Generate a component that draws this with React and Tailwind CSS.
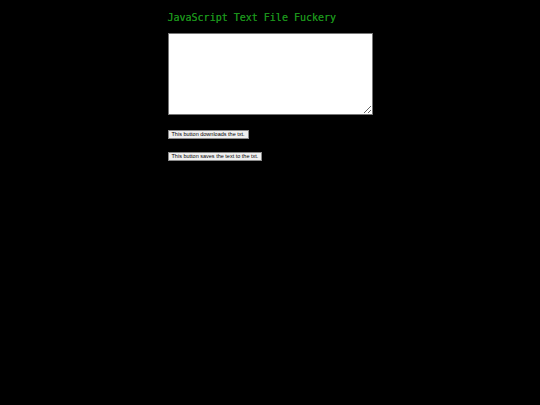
import React, { useState } from 'react';

const App = () => {
  const [text, setText] = useState('');

  return (
    <div className="min-h-screen bg-black flex justify-center">
      <div className="w-[205px] flex flex-col items-start">
        <h1 className="mt-[11px] text-[10px] leading-[14px] text-[#1a901a] font-['DejaVu_Sans_Mono',monospace] [text-shadow:0_0_0.3px_#1a901a]">
          JavaScript Text File Fuckery
        </h1>
        <textarea
          value={text}
          onChange={(e) => setText(e.target.value)}
          className="mt-[8px] w-[205px] h-[82px] bg-white border border-[#767676] text-[6px] outline-none"
        />
        <button className="mt-[15px] h-[9px] px-[3px] bg-[#f0f0f0] border border-[#8a8a8a] text-[5.5px] leading-[7px] text-black font-['Liberation_Sans',Arial,sans-serif]">
          This button downloads the txt.
        </button>
        <button className="mt-[13px] h-[9px] px-[3px] bg-[#f0f0f0] border border-[#8a8a8a] text-[5.5px] leading-[7px] text-black font-['Liberation_Sans',Arial,sans-serif]">
          This button saves the text to the txt.
        </button>
      </div>
    </div>
  );
};

export default App;
